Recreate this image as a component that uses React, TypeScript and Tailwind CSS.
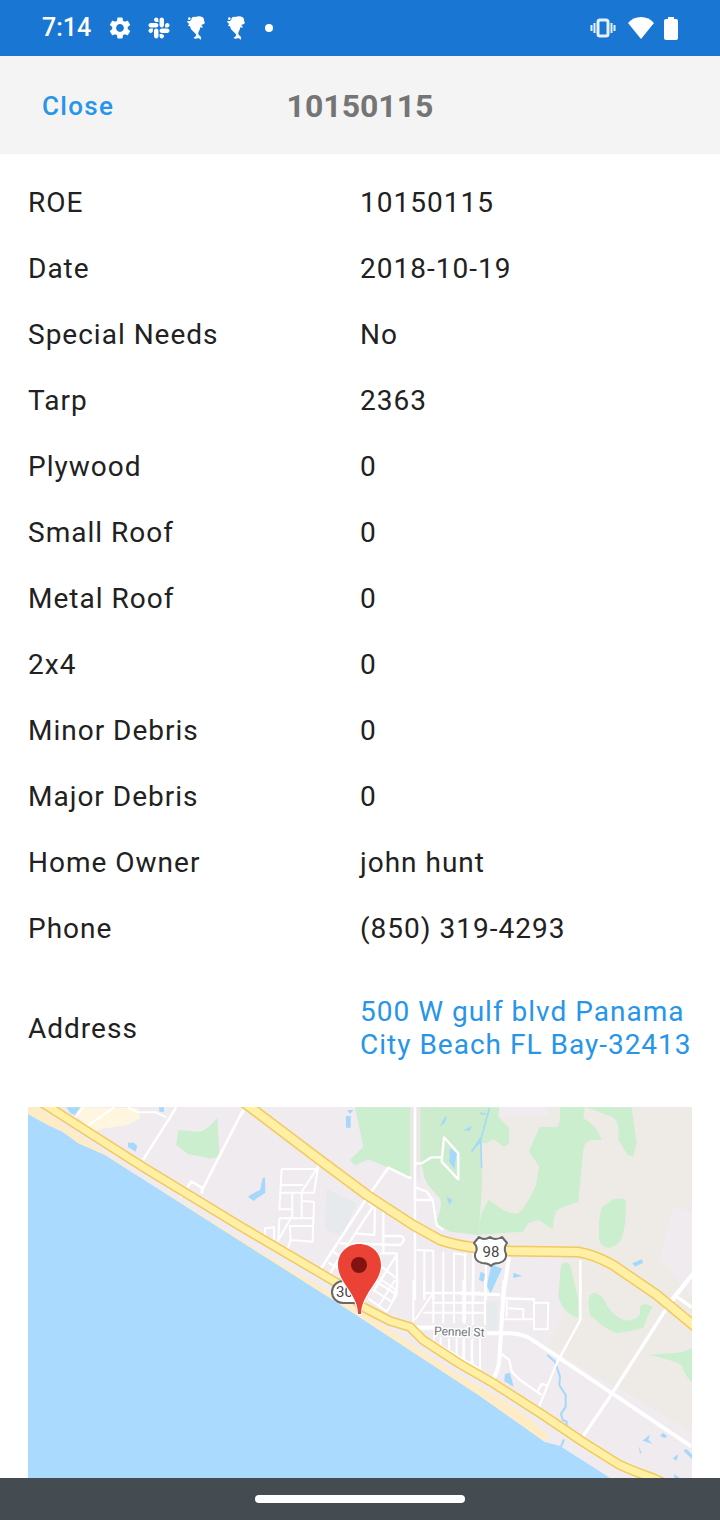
import type { ReactNode } from "react";
import { FaSlack } from "react-icons/fa";
import { MdSettings } from "react-icons/md";

type Detail = { label: string; value: string };

const details: Detail[] = [
  { label: "ROE", value: "10150115" },
  { label: "Date", value: "2018-10-19" },
  { label: "Special Needs", value: "No" },
  { label: "Tarp", value: "2363" },
  { label: "Plywood", value: "0" },
  { label: "Small Roof", value: "0" },
  { label: "Metal Roof", value: "0" },
  { label: "2x4", value: "0" },
  { label: "Minor Debris", value: "0" },
  { label: "Major Debris", value: "0" },
  { label: "Home Owner", value: "john hunt" },
  { label: "Phone", value: "(850) 319-4293" },
];

function DolphinIcon() {
  return (
    <svg viewBox="0 0 54 72" className="h-6 w-[18px]" fill="currentColor">
      <circle cx="7" cy="8" r="4" />
      <path d="M13 8Q16 1 24 3Q38-2 47 4Q53 9 51 16Q56 19 51 24L42 27Q48 29 46 36L40 33Q40 41 35 47Q33 52 35 57Q44 60 42 71L34 66Q27 71 19 66Q27 62 28 56Q24 51 18 46Q10 40 9 31L3 30Q4 26 7 24Q1 21 0 15Q6 14 10 16Q9 12 13 12Z" />
    </svg>
  );
}

function VibrateIcon() {
  return (
    <svg viewBox="0 0 26 20" className="h-5 w-[26px]" fill="none" stroke="currentColor" strokeWidth="2">
      <rect x="8" y="2" width="10" height="16" rx="2" strokeWidth="3" />
      <path d="M4.500 5V15M1.500 7V13M21.500 5V15M24.500 7V13" />
    </svg>
  );
}

function WifiIcon() {
  return (
    <svg viewBox="0 0 26 22" className="h-[22px] w-[26px]" fill="currentColor">
      <path d="M13 22L0 6Q5 0 13 0T26 6Z" />
    </svg>
  );
}

function BatteryIcon() {
  return (
    <svg viewBox="0 0 14 24" className="h-6 w-3.5" fill="currentColor">
      <path d="M4 1H10V3H12Q14 3 14 5V22Q14 24 12 24H2Q0 24 0 22V5Q0 3 2 3H4Z" />
    </svg>
  );
}

function StatusBar() {
  return (
    <div className="flex h-14 shrink-0 items-center justify-between bg-[#1976d3] px-[42px] text-white">
      <div className="flex items-center">
        <span className="text-[25px] leading-8 font-medium">7:14</span>
        <MdSettings className="ml-4 size-[26px]" />
        <FaSlack className="mr-4 ml-3.5 size-6" />
        <DolphinIcon />
        <span className="w-[22px]" />
        <DolphinIcon />
        <span className="ml-5 size-2 rounded-full bg-white" />
      </div>
      <div className="flex items-center">
        <span className="mr-3 opacity-90">
          <VibrateIcon />
        </span>
        <span className="mr-2.5">
          <WifiIcon />
        </span>
        <BatteryIcon />
      </div>
    </div>
  );
}

// Every tile is drawn at three units to the pixel
function Tile({ x, y, children }: { x: number; y: number; children: ReactNode }) {
  return <g transform={`translate(${x} ${y}) scale(0.3333)`}>{children}</g>;
}

function Highway({ d, width }: { d: string; width: number }) {
  return (
    <g fill="none" strokeLinejoin="round">
      <path d={d} stroke="#f3c95f" strokeWidth={width} />
      <path d={d} stroke="#fff0a5" strokeWidth={width - 3} />
    </g>
  );
}

function MapAreas() {
  return (
    <>
      <rect width="664" height="371" fill="#efebef" />
      <path d="M460 10H520V0H664V105L645 100L632 150L664 190V325L605 290L520 240L540 200L535 150L470 140L450 125V33Z" fill="#eeebe7" />
      <Tile x={0} y={-7}>
        <path d="M145 22L330 25L337 55L300 75L230 85L190 95L150 50Z" fill="#fff6e0" />
        <path d="M450 90L515 95Q540 90 568 53L574 165Q560 178 540 174L480 162L445 135Z" fill="#cbeecf" />
        <g fill="#a5d8fb">
          <path d="M115 22H158L140 45L128 40ZM393 22H408V35H395ZM300 128H318L328 138L323 155L300 141ZM690 272L660 290L677 302L690 290Z" />
        </g>
      </Tile>
      <Tile x={212} y={-7}>
        <path d="M345 22H510V232L445 203L385 178L345 196L330 180L370 140L355 70Z" fill="#cbeecf" />
        <path d="M540 22H750L722 140L726 250L720 350L712 405L630 395L585 370Q610 325 600 295Q545 240 550 210L540 190Z" fill="#cdebcd" />
        <path d="M510 22H541V240H510Z" fill="#ebe7e7" />
        <path d="M260 268L350 310L305 410L255 385Z" fill="#e6eaed" />
        <g fill="#a5d8fb">
          <path d="M68 235L75 232L76 278L40 302L25 290L60 270ZM318 48H332V83H318ZM322 30H340L330 42ZM630 145L650 160L643 208L628 185ZM620 290L638 300L628 315ZM600 78L612 55L622 45L614 70ZM672 90L695 78L690 92ZM692 155L720 115V130Z" />
        </g>
      </Tile>
      <Tile x={432} y={-7}>
        <g fill="#cbeecf">
          <path d="M85 22H118L115 50L147 85V130Q135 145 122 134L100 118L80 130L62 128Z" />
          <path d="M300 22H375L370 55Q410 75 425 120L395 119Q372 125 370 150L355 305L300 325Q280 335 278 388L235 360L205 370L190 395L50 405L65 340L85 300L130 330Q160 345 175 340Q200 320 228 255L238 200L207 155Q220 120 240 80L290 82Q303 75 300 22Z" />
          <path d="M375 22H515L530 130L520 168Q505 170 500 160L475 120Q480 60 455 50L410 33Z" />
          <path d="M455 300Q480 290 497 300Q500 350 490 400Q482 435 450 443Q425 445 417 420Q415 360 424 325Z" />
          <path d="M303 495Q320 480 332 498L355 600V655Q310 640 295 590Z" />
        </g>
        <g fill="#a5d8fb">
          <path d="M95 493L126 506L92 580L80 558ZM62 515L76 522L70 545L57 540ZM160 518L187 528L160 534ZM517 490L545 478L550 488L525 500ZM12 90L35 80L30 92Z" />
        </g>
        <path d="M88 25L62 120L65 205M60 40L78 42M62 115L35 155" fill="none" stroke="#a5d8fb" strokeWidth="5" />
      </Tile>
      <Tile x={432} y={173}>
        <g fill="#cbeecf">
          <path d="M385 70Q385 40 405 38Q430 45 440 75Q465 115 500 122Q535 120 540 100V80Q550 65 578 80Q560 110 550 143Q510 155 470 160Q430 145 390 105Z" />
          <path d="M565 225L640 219Q670 220 697 203V308Q675 290 665 255Q640 240 565 225Z" />
        </g>
        <path d="M80 65H112V150H82Z" fill="#e6eaed" />
        <g fill="#a5d8fb">
          <path d="M135 282L150 278L161 320L133 304ZM548 482L570 463L565 480L578 492ZM600 467L610 458L622 470L612 474ZM670 512L680 507L697 525V538ZM638 535L655 523L650 542ZM535 498L545 518L540 520ZM643 582L660 595H643Z" />
        </g>
        <path d="M262 225L285 245L300 290L298 315L317 345V380L303 402L308 420L320 425V445M312 478L303 500" fill="none" stroke="#a5d8fb" strokeWidth="6" />
      </Tile>
    </>
  );
}

function MapStreets() {
  return (
    <g fill="none" stroke="#ffffff" strokeLinejoin="round">
      <Tile x={0} y={-7}>
        <path d="M445 22L345 180M645 30L520 275M458 292L490 245L525 265L520 280" strokeWidth="8" />
        <path d="M258 22L175 80M165 22L140 55M300 22L330 37H385L415 52" strokeWidth="6" />
      </Tile>
      <Tile x={212} y={-7}>
        <path d="M0 50L12 30M525 22V300M515 235L500 230L445 203L380 295L240 510" strokeWidth="8" />
        <path
          d="M238 195L185 275M235 195L228 240L222 278H120M125 207H230M125 207L118 328H155M122 255H190M157 278V352M185 278V352M185 303L222 305L218 425L152 420M118 355H218M150 378H218M118 355L115 425M155 350L115 420M150 375L152 420L143 448M75 410V385L102 382V420"
          strokeWidth="6"
        />
        <path
          d="M525 190H545L575 172H605M612 112L655 160V238L605 185ZM525 262L560 275L578 300L590 375L610 390M525 300H578M525 300V600M385 310L405 325L403 405L345 400M400 318L300 470L265 530M430 335V460M300 430L480 435Q500 420 485 408H430M265 488L295 505M280 455L310 475M420 460H470L472 560L460 600M470 465L400 575M425 500L470 535M400 540L465 580"
          strokeWidth="7"
        />
        <path d="M530 450L580 452V600M553 450V600M553 580H720M610 455V600M642 460V600M675 465V600M640 460L680 465" strokeWidth="6" />
      </Tile>
      <Tile x={432} y={-7}>
        <path d="M15 460V600M40 460V600M78 495V600M0 578L120 583M130 595L225 598M361 480V600" strokeWidth="7" />
        <path d="M147 470L128 600M700 520L635 600" strokeWidth="12" />
      </Tile>
      <Tile x={212} y={173}>
        <path d="M520 0V125M553 0V60M555 38H720M575 45L525 120M550 98H720M580 0V130M610 0V130M642 0V130M675 0V130M580 68H720M582 165V185M602 170V205M627 175V220M650 175V232M672 175V245M697 175V258" strokeWidth="6" />
        <path d="M385 55L440 95L470 45V0M400 30L455 65M425 0L470 30M415 80L465 0" strokeWidth="6" />
        <path d="M515 143H600" strokeWidth="13" />
        <path d="M565 178L720 268" strokeWidth="9" />
      </Tile>
      <Tile x={432} y={173}>
        <path d="M10 0V130M38 0V135M75 0V135M0 42L120 46M0 68H75M0 98H75M10 180V240M35 180V255M60 175V270M135 55L222 58V118H133M145 85L190 88V115M140 60V110M222 68H265L263 148H222Z" strokeWidth="6" />
        <path d="M361 0V120L290 250L235 385M125 222L148 240L155 275L180 300L245 345M232 335L245 312L265 318" strokeWidth="7" />
        <path d="M685 0L610 100L450 350L365 475M650 50L695 82" strokeWidth="10" />
        <path d="M80 160H150Q195 162 225 185L695 500M133 0L118 240Q115 275 95 305" strokeWidth="12" />
      </Tile>
    </g>
  );
}

function LocationMap() {
  return (
    <svg
      viewBox="0 0 664 371"
      preserveAspectRatio="xMidYMin slice"
      className="min-h-[371px] w-full flex-1"
      fontFamily="Roboto, sans-serif"
      role="img"
      aria-label="Map"
    >
      <MapAreas />
      <path d="M0 371V7L20 18L35 25L50 36L77 48L302 191L452 289L517 335L532 339L582 371Z" fill="#abdaff" />
      <path
        d="M0 0H10L115 72L230 143L309 189L335 205L432 269L469 289L499 309L521 329L517 335L452 289L330 209L302 191L77 48L50 36L35 25L20 18L0 7Z"
        fill="#feecc6"
      />
      <MapStreets />
      <Highway
        width={10}
        d="M6 -9L21 0L115 60L212 119L309 176L335 200L362 214L382 220L395 233L432 257L465 276L515 308L555 335L590 357Q602 363 625 371L640 378"
      />
      <Highway
        width={11}
        d="M208 -10L222 0L292 53L339 88L385 118L412 133Q435 141 482 144L550 145Q565 147 585 158L629 188L670 222"
      />

      <g>
        <path
          d="M451 130Q456 134 462 130Q467 134 474 130L479 136Q475 141 478 147Q479 154 471 156Q465 156 463 159Q460 156 454 156Q446 154 447 147Q451 141 446 136Z"
          fill="#ffffff"
          stroke="#686868"
          strokeWidth="2"
          strokeLinejoin="round"
        />
        <text x="463" y="150" textAnchor="middle" fontSize="15" fill="#464646">
          98
        </text>
      </g>
      <g>
        <rect x="304" y="174" width="34" height="22" rx="11" fill="#ffffff" stroke="#686868" strokeWidth="2" />
        <text x="308" y="190" fontSize="15" fill="#464646">
          30
        </text>
      </g>
      <text
        x="406"
        y="228"
        fontSize="12"
        fill="#6d7378"
        stroke="#ffffff"
        strokeWidth="3"
        paintOrder="stroke"
        transform="rotate(2 406 228)"
      >
        Pennel St
      </text>

      <path
        d="M331 137C319 137 310 146 310 158C310 170 318 177 324 188Q330 198 330 207H333Q333 198 339 188C345 177 353 170 353 158C353 146 344 137 331 137Z"
        fill="#ea4335"
        stroke="#ffffff"
        strokeWidth="2"
        paintOrder="stroke"
      />
      <circle cx="331" cy="158" r="8" fill="#811411" />
    </svg>
  );
}

export default function App() {
  return (
    <div className="flex min-h-screen flex-col bg-white font-[Roboto,sans-serif] text-[#212121]">
      <StatusBar />

      <header className="grid h-[98px] shrink-0 grid-cols-3 items-center bg-[#f4f4f4] px-[42px] pt-0.5">
        <button type="button" className="justify-self-start text-[26px] leading-8 font-medium tracking-wider text-[#2795e9]">
          Close
        </button>
        <h1 className="text-center text-[32px] leading-10 font-bold text-[#757575]">10150115</h1>
      </header>

      <main className="flex flex-1 flex-col px-7 pt-[15px]">
        <dl className="mb-3 text-[28px] leading-[33px] tracking-[1px]">
          {details.map(({ label, value }) => (
            <div key={label} className="grid h-[66px] grid-cols-2 items-center">
              <dt>{label}</dt>
              <dd>{value}</dd>
            </div>
          ))}
          <div className="grid min-h-[134px] grid-cols-2 items-center">
            <dt>Address</dt>
            <dd>
              <a href="#map" className="text-[#2795e9]">
                500 W gulf blvd Panama City Beach FL Bay-32413
              </a>
            </dd>
          </div>
        </dl>
        <div id="map" className="flex flex-1 flex-col">
          <LocationMap />
        </div>
      </main>

      <div className="flex h-[42px] shrink-0 items-center justify-center bg-[#444c52]">
        <span className="h-2 w-[210px] rounded-full bg-white" />
      </div>
    </div>
  );
}
